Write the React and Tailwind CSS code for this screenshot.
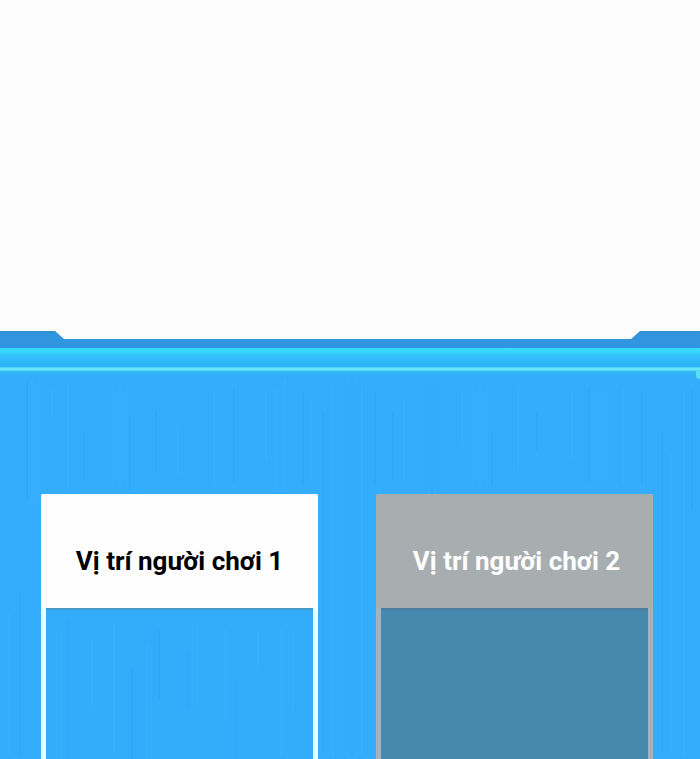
const streaks = [
  [26, 10, 120, "d"], [31, 8, 125, "l"], [51, 16, 30, "l"], [67, 14, 105, "l"], [83, 60, 50, "d"],
  [119, 15, 100, "l"], [129, 45, 75, "d"], [155, 40, 60, "d"], [177, 55, 50, "l"], [213, 20, 95, "l"],
  [233, 16, 95, "d"], [265, 20, 70, "l"], [276, 18, 100, "l"], [284, 8, 110, "l"], [302, 20, 95, "d"],
  [310, 30, 80, "l"], [322, 40, 340, "d"], [332, 15, 370, "l"], [351, 10, 375, "d"], [361, 14, 370, "l"],
  [374, 20, 95, "d"], [392, 40, 70, "d"], [403, 30, 80, "l"], [431, 12, 110, "d"], [461, 20, 55, "l"],
  [479, 15, 100, "l"], [491, 60, 55, "d"], [517, 15, 85, "l"], [536, 40, 40, "d"], [571, 20, 70, "l"],
  [588, 16, 95, "d"], [599, 20, 90, "l"], [622, 15, 100, "l"], [641, 20, 95, "d"], [661, 60, 320, "d"],
  [670, 80, 300, "l"], [683, 20, 365, "l"], [691, 18, 120, "d"], [8, 240, 145, "l"], [19, 220, 165, "d"],
];

const innerStreaks = [
  [14, 20, 130, "l"], [22, 8, 142, "d"], [45, 30, 70, "l"], [67, 12, 130, "l"], [85, 60, 90, "d"],
  [100, 35, 115, "l"], [112, 20, 70, "d"], [142, 40, 60, "d"], [150, 14, 80, "l"], [178, 20, 90, "l"],
  [188, 70, 80, "d"], [211, 20, 40, "l"], [234, 16, 130, "l"], [246, 20, 80, "l"],
];

function Texture({ lines }) {
  return (
    <svg className="pointer-events-none absolute inset-0 h-full w-full" aria-hidden="true">
      {lines.map(([x, y, height, tone]) => (
        <rect
          key={x}
          x={x}
          y={y}
          width="2"
          height={height}
          fill={tone === "d" ? "#1689e0" : "#54c0ff"}
          opacity={tone === "d" ? "0.1" : "0.2"}
        />
      ))}
    </svg>
  );
}

function PlayerSlot({ name, active }) {
  return (
    <section
      className={
        active
          ? "flex flex-col rounded-t-xs border-x-5 border-[#e9ffff] bg-[#33acfa]"
          : "flex flex-col rounded-t-xs border-x-5 border-[#a5b2ba] bg-[#4788ae]"
      }
    >
      <h2
        className={
          active
            ? "-mx-[5px] flex h-[114px] items-center justify-center rounded-t-xs bg-[#fefefe] pt-5 text-[26px] font-bold whitespace-nowrap text-black"
            : "-mx-[5px] flex h-[114px] items-center justify-center rounded-t-xs bg-[#a8adb0] pt-5 pl-1 text-[26px] font-bold whitespace-nowrap text-white"
        }
      >
        {name}
      </h2>
      <div
        className={
          active
            ? "relative flex-1 overflow-hidden border-t-2 border-[#4799c5]"
            : "relative flex-1 overflow-hidden border-t-2 border-[#4a7e9f]"
        }
      >
        {active && <Texture lines={innerStreaks} />}
      </div>
    </section>
  );
}

export default function App() {
  return (
    <main className="flex min-h-screen flex-col bg-[#fdfdfd] pt-[331px] font-['Roboto','Noto_Sans',sans-serif]">
      <div className="h-[17px] bg-linear-to-b from-[#2f91cf] from-5% via-[#3294df] via-20% to-[#3096e2] [clip-path:polygon(0_0,55px_0,64px_8px,calc(100%_-_69px)_8px,calc(100%_-_60px)_0,100%_0,100%_100%,0_100%)]" />
      <div className="h-[19px] bg-linear-to-b from-[#38d9fb] from-15% via-[#32befb] via-45% to-[#2eb1f8]" />
      <div className="h-1 bg-linear-to-b from-[#40cdf5] via-[#6ff0fa] to-[#4bcdf0]" />
      <div className="relative flex flex-1 flex-col bg-[#33adfc]">
        <Texture lines={streaks} />
        <div className="h-1 bg-linear-to-b from-[#39bdf0] to-[#33adfc]" />
        <span className="absolute top-0 right-0 h-2 w-1 rounded-bl-sm bg-[#5bdff5]" />
        <div className="relative grid min-h-[384px] flex-1 grid-cols-2 gap-[58px] pt-[119px] pr-[47px] pl-[41px]">
          <PlayerSlot name="Vị trí người chơi 1" active />
          <PlayerSlot name="Vị trí người chơi 2" active={false} />
        </div>
      </div>
    </main>
  );
}
